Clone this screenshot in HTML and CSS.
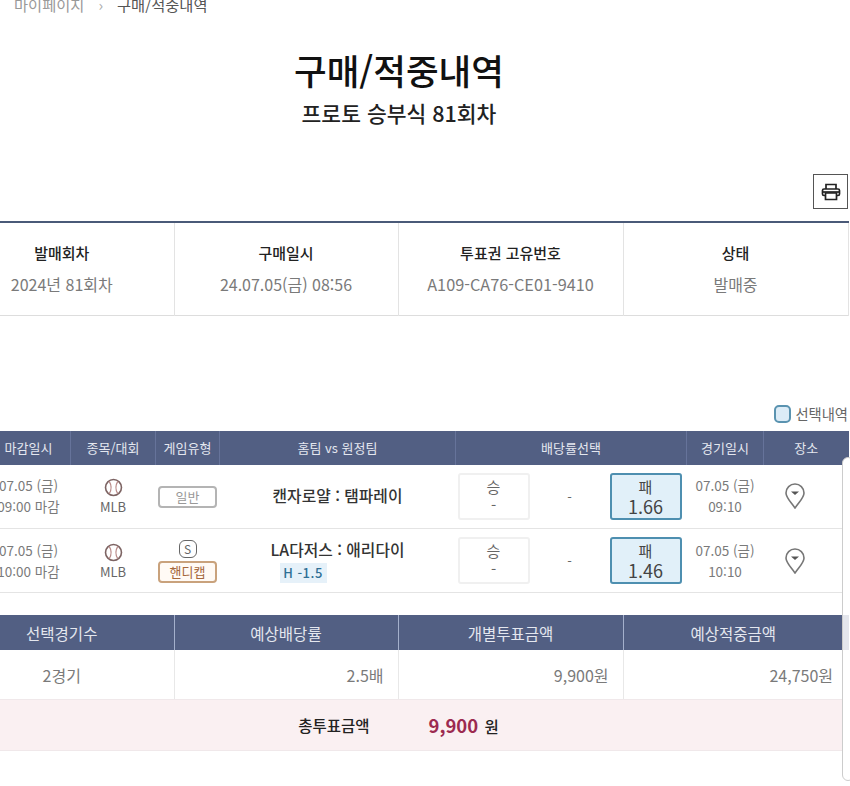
FILE: index.html
```html
<!DOCTYPE html>
<html lang="ko">
<head>
    <meta charset="utf-8">
    <title>구매/적중내역</title>
    <link rel="stylesheet" href="styles.css">
</head>
<body>
    <div class="page">
        <div class="breadcrumb">
            <span>마이페이지</span>
            <span class="crumb-sep">›</span>
            <span class="crumb-now">구매/적중내역</span>
        </div>

        <h1>구매/적중내역</h1>
        <h2>프로토 승부식 81회차</h2>

        <div class="print-row">
            <button class="print-btn">
                <svg width="20" height="20" viewBox="0 0 20 20" fill="none" stroke="#222" stroke-width="1.7">
                    <path d="M5 7V2.500h10V7"/>
                    <rect x="1.500" y="7" width="17" height="6.500" rx="1.500"/>
                    <path d="M4.500 11v6.500h11V11z" fill="#fff"/>
                    <path d="M1.500 10h17"/>
                </svg>
            </button>
        </div>

        <table class="info-table">
            <colgroup>
                <col class="s-a"><col class="s-a"><col class="s-b"><col class="s-b">
            </colgroup>
            <tr>
                <th>발매회차</th>
                <th>구매일시</th>
                <th>투표권 고유번호</th>
                <th>상태</th>
            </tr>
            <tr>
                <td>2024년 81회차</td>
                <td>24.07.05(금) 08:56</td>
                <td>A109-CA76-CE01-9410</td>
                <td>발매중</td>
            </tr>
        </table>

        <div class="legend">
            <span class="legend-box"></span>
            <span>선택내역</span>
        </div>

        <table class="game-table">
            <colgroup>
                <col class="c-no"><col class="c-close"><col class="c-sport"><col class="c-type">
                <col class="c-team"><col class="c-odds"><col class="c-date"><col class="c-place">
            </colgroup>
            <tr>
                <th></th>
                <th>마감일시</th>
                <th>종목/대회</th>
                <th>게임유형</th>
                <th>홈팀 vs 원정팀</th>
                <th>배당률선택</th>
                <th>경기일시</th>
                <th>장소</th>
            </tr>
            <tr>
                <td></td>
                <td class="dates">07.05 (금)<br>09:00 마감</td>
                <td class="sport">
                    <svg class="ball" width="20" height="20" viewBox="0 0 20 20" fill="#fff" stroke="#7d6463" stroke-width="1.7">
                        <circle cx="10" cy="10" r="8.400"/>
                        <path d="M5.500 3.500Q9.500 10 5.500 16.500M14.500 3.500Q10.500 10 14.500 16.500" stroke="#b98a88" stroke-width="1.300" fill="none"/>
                    </svg>
                    <div>MLB</div>
                </td>
                <td class="kind"><span class="badge">일반</span></td>
                <td class="teams">캔자로얄 : 탬파레이</td>
                <td>
                    <div class="odds">
                        <div class="pick">승<b>-</b></div>
                        <div class="draw">-</div>
                        <div class="pick on">패<b>1.66</b></div>
                    </div>
                </td>
                <td class="dates">07.05 (금)<br>09:10</td>
                <td>
                    <svg class="pin" width="20" height="26" viewBox="0 0 20 26" fill="none" stroke="#777" stroke-width="1.600">
                        <path d="M10 25C5 18 1 14.500 1 10a9 9 0 0 1 18 0c0 4.500-4 8-9 15z"/>
                        <path d="M6 8.500h8L10 12z" fill="#555" stroke="none"/>
                    </svg>
                </td>
            </tr>
            <tr>
                <td></td>
                <td class="dates">07.05 (금)<br>10:00 마감</td>
                <td class="sport">
                    <svg class="ball" width="20" height="20" viewBox="0 0 20 20" fill="#fff" stroke="#7d6463" stroke-width="1.7">
                        <circle cx="10" cy="10" r="8.400"/>
                        <path d="M5.500 3.500Q9.500 10 5.500 16.500M14.500 3.500Q10.500 10 14.500 16.500" stroke="#b98a88" stroke-width="1.300" fill="none"/>
                    </svg>
                    <div>MLB</div>
                </td>
                <td class="kind">
                    <span class="sym">S</span>
                    <span class="badge handi">핸디캡</span>
                </td>
                <td class="teams">LA다저스 : 애리다이<br><span class="hcap">H -1.5</span></td>
                <td>
                    <div class="odds">
                        <div class="pick">승<b>-</b></div>
                        <div class="draw">-</div>
                        <div class="pick on">패<b>1.46</b></div>
                    </div>
                </td>
                <td class="dates">07.05 (금)<br>10:10</td>
                <td>
                    <svg class="pin" width="20" height="26" viewBox="0 0 20 26" fill="none" stroke="#777" stroke-width="1.600">
                        <path d="M10 25C5 18 1 14.500 1 10a9 9 0 0 1 18 0c0 4.500-4 8-9 15z"/>
                        <path d="M6 8.500h8L10 12z" fill="#555" stroke="none"/>
                    </svg>
                </td>
            </tr>
        </table>

        <table class="sum-table">
            <colgroup>
                <col class="s-a"><col class="s-a"><col class="s-b"><col class="s-c">
            </colgroup>
            <tr>
                <th>선택경기수</th>
                <th>예상배당률</th>
                <th>개별투표금액</th>
                <th>예상적중금액</th>
            </tr>
            <tr>
                <td class="mid">2경기</td>
                <td>2.5배</td>
                <td>9,900원</td>
                <td class="last">24,750원</td>
            </tr>
        </table>

        <div class="total">
            <strong>총투표금액</strong>
            <span class="total-num"><em>9,900</em> 원</span>
        </div>
    </div>

    <!-- edge of the panel lying over the right side of the page -->
    <div class="panel-edge"></div>
</body>
</html>
```

FILE: styles.css
```css
* {
box-sizing: border-box;
}

html, body {
height: 786px;
overflow: hidden;
}

body {
position: relative;
margin: 0;
background-color: #fff;
color: #333;
font-family: "Noto Sans CJK KR", "Noto Sans", sans-serif;
font-size: 14px;
}

.page {
width: 898px;
margin-left: -50px;
}

.breadcrumb {
display: flex;
gap: 14px;
height: 20px;
margin-top: -6px;
padding-left: 64px;
color: #999;
font-size: 15.300px;
line-height: 20px;
}

.crumb-sep {
color: #aaa;
}

.crumb-now {
color: #555;
}

h1 {
margin: 31px 0 0;
color: #111;
font-size: 35.500px;
font-weight: 500;
line-height: 50px;
text-align: center;
}

h2 {
margin: 3px 0 0;
color: #222;
font-size: 21.500px;
font-weight: 500;
line-height: 30px;
text-align: center;
}

.print-row {
display: flex;
justify-content: flex-end;
margin-top: 46px;
}

.print-btn {
display: flex;
align-items: center;
justify-content: center;
width: 35px;
height: 35px;
padding: 0;
background-color: #fff;
border: 1px solid #555;
}

table {
border-collapse: collapse;
table-layout: fixed;
}

.s-a { width: 224px; }
.s-b { width: 225px; }
.s-c { width: 220px; }

.info-table {
width: 898px;
margin-top: 12px;
border-top: 2px solid #4a5a78;
border-bottom: 1px solid #ddd;
}

.info-table th, .info-table td {
border-left: 1px solid #e3e3e3;
text-align: center;
}

.info-table tr > :first-child {
border-left: none;
}

.info-table tr > :last-child {
border-right: 1px solid #e3e3e3;
}

.info-table th {
height: 47px;
padding-top: 14px;
color: #222;
font-size: 15px;
font-weight: 500;
}

.info-table td {
height: 46px;
padding-bottom: 16px;
color: #7a7a7a;
font-size: 16px;
font-weight: 400;
}

.info-table td:nth-child(3) {
font-size: 16.300px;
}

.legend {
display: flex;
align-items: center;
justify-content: flex-end;
gap: 4px;
height: 18px;
margin-top: 89px;
color: #666;
font-size: 14.300px;
}

.legend-box {
width: 17px;
height: 18px;
background-color: #dcecf7;
border: 2px solid #5a93b0;
border-radius: 5px;
}

.game-table {
width: 898px;
margin-top: 8px;
font-size: 13px;
}

.c-no { width: 36px; }
.c-close { width: 84px; }
.c-sport { width: 85px; }
.c-type { width: 64px; }
.c-team { width: 236px; }
.c-odds { width: 231px; }
.c-date { width: 77px; }
.c-place { width: 85px; }

.game-table th {
height: 34px;
padding: 0;
background-color: #525f83;
border-left: 1px solid #66739a;
color: #e4e7ef;
font-size: 13px;
font-weight: 400;
}

.game-table td {
height: 64px;
padding: 0;
border-bottom: 1px solid #e4e4e4;
text-align: center;
vertical-align: middle;
}

.dates {
color: #7a7a7a;
font-size: 13.500px;
line-height: 21px;
}

.sport {
color: #666;
line-height: 19px;
}

.game-table td.sport {
padding-top: 2px;
}

.ball {
display: block;
width: 19px;
height: 19px;
margin: 0 auto;
}

.game-table td.kind {
padding-top: 2px;
}

.badge {
display: block;
width: 59px;
height: 22px;
margin: 0 auto;
background-color: #fff;
border: 2px solid #b4b4b4;
border-radius: 4px;
color: #999;
font-size: 13px;
line-height: 18px;
}

.badge.handi {
background-color: #fffaf5;
border-color: #c9a27c;
color: #a5683c;
}

.sym {
display: block;
width: 18px;
height: 18px;
margin: 0 auto 3px;
border: 1px solid #666;
border-radius: 6px;
color: #666;
font-size: 12px;
line-height: 16px;
}

.teams {
color: #333;
font-size: 15.800px;
font-weight: 500;
line-height: 22px;
}

.hcap {
display: inline-block;
width: 47px;
margin-right: 69px;
background-color: #e6f1f9;
color: #2f6f95;
font-size: 13px;
font-weight: 500;
letter-spacing: 0.5px;
line-height: 20px;
}

.odds {
display: flex;
align-items: center;
justify-content: space-between;
padding: 0 5px 0 2px;
}

.pick {
width: 72px;
height: 47px;
padding-top: 3px;
background-color: #fff;
border: 2px solid #f0f0f0;
border-radius: 3px;
color: #666;
font-size: 15px;
line-height: 18px;
}

.pick b {
display: block;
font-weight: 400;
}

.pick.on {
background-color: #e1f0f9;
border-color: #4e8fb0;
color: #444;
}

.pick.on b {
font-size: 18px;
line-height: 20px;
}

.draw {
color: #666;
}

.pin {
display: block;
margin: 0 auto;
transform: translateX(-11px);
}

.sum-table {
width: 893px;
margin-top: 22px;
font-size: 16px;
}

.sum-table th {
height: 35px;
padding: 0;
background-color: #525f83;
border-left: 1px solid #a4b0cc;
color: #e4e7ef;
font-size: 15.500px;
font-weight: 400;
}

.sum-table td {
height: 49px;
padding: 0 14px 0 0;
border-left: 1px solid #e8e8e8;
color: #7a7a7a;
text-align: right;
}

.sum-table th:first-child, .sum-table td:first-child {
border-left: none;
}

.sum-table td.mid {
padding: 0;
text-align: center;
}

.sum-table td.last {
padding-right: 10px;
}

.total {
display: flex;
align-items: center;
justify-content: center;
gap: 59px;
width: 893px;
height: 52px;
padding-left: 4px;
background-color: #faf0f2;
border-top: 1px solid #f0e8ea;
border-bottom: 1px solid #f0e8ea;
font-size: 15.500px;
}

.total strong {
color: #222;
font-weight: 500;
}

.total-num {
color: #222;
font-weight: 500;
}

.total-num em {
margin-right: 2px;
color: #9c2a50;
font-size: 18.500px;
font-style: normal;
font-weight: 700;
}

.panel-edge {
position: absolute;
top: 457px;
left: 842px;
width: 12px;
height: 324px;
background-color: #fff;
border: 1px solid #ccc;
border-radius: 8px;
}

.panel-edge::after {
content: "";
position: absolute;
top: 157px;
left: 0;
width: 6px;
height: 35px;
background-color: #e4e6ec;
}
```
